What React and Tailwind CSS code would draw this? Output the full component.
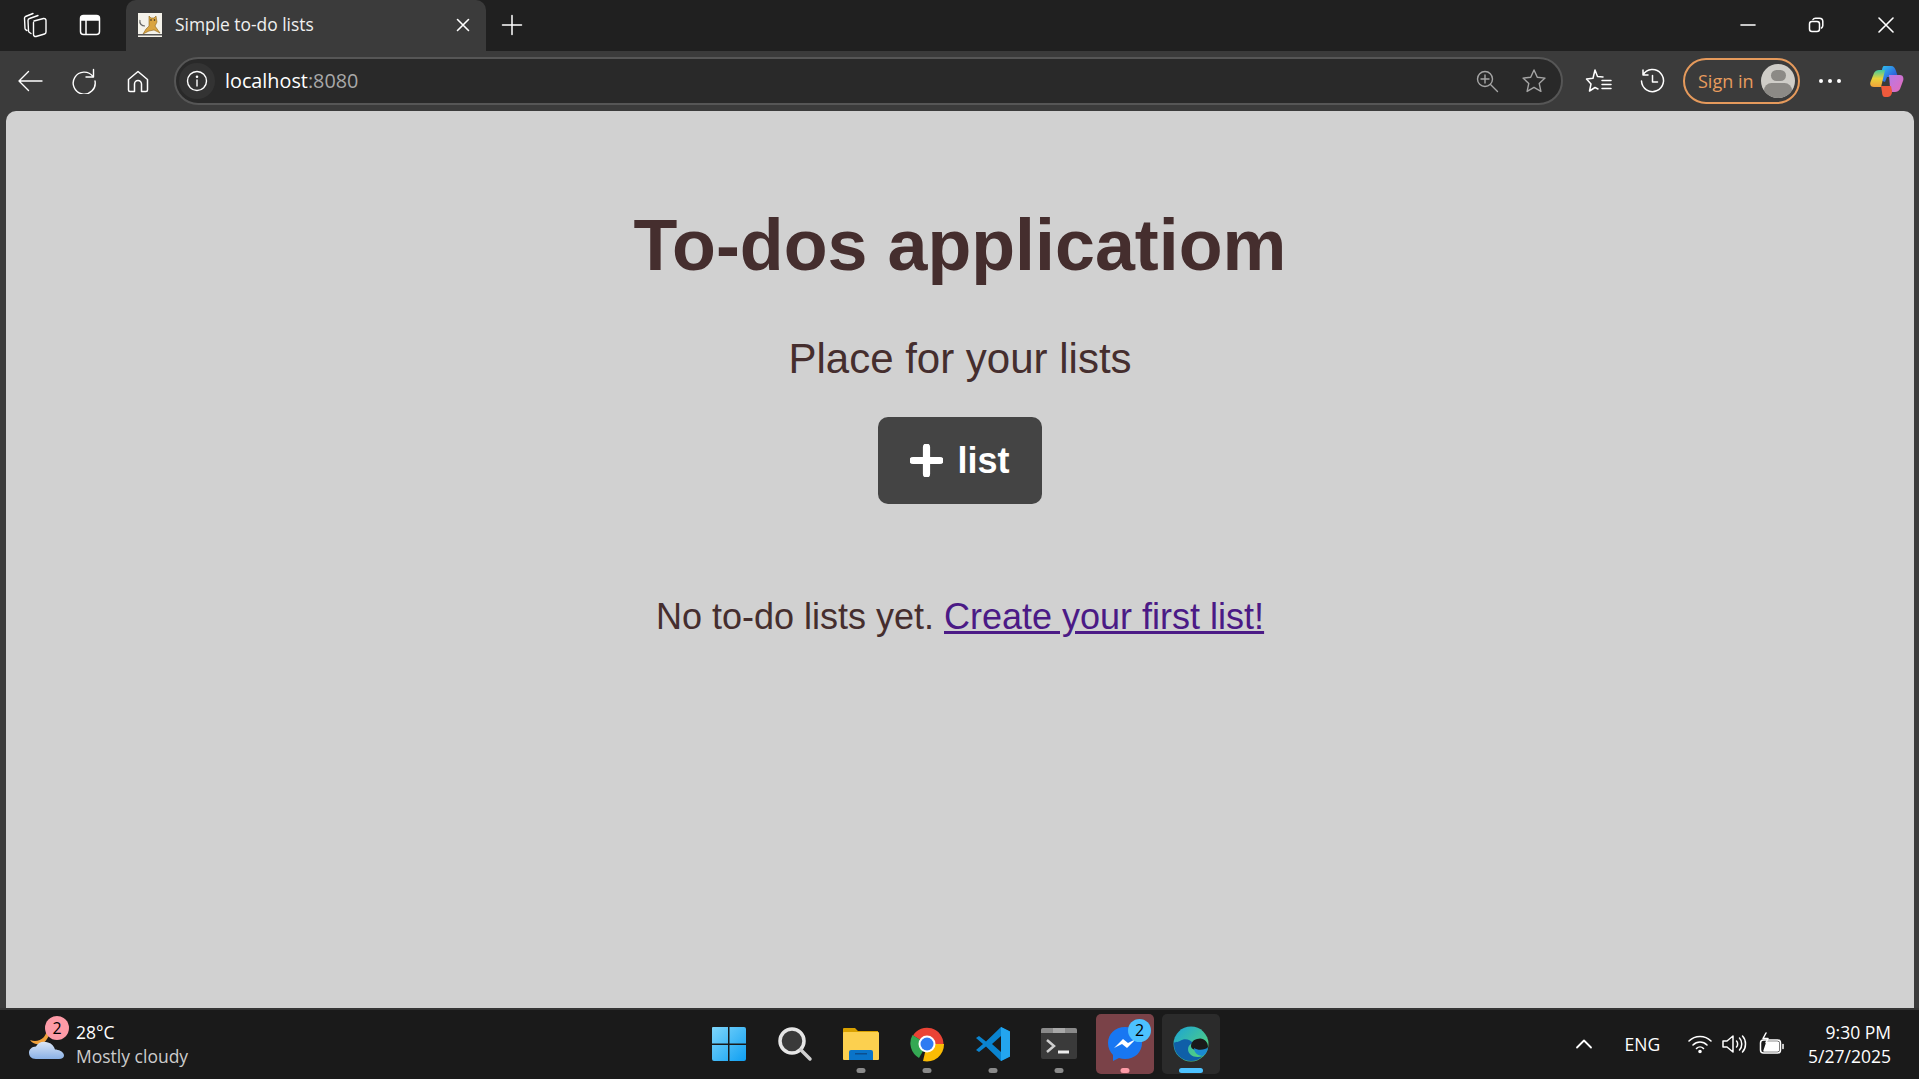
import React from "react";

const S = ({ w = 24, h = 24, vb, children, className = "", stroke = "currentColor", sw = 1.5 }) => (
  <svg width={w} height={h} viewBox={vb || `0 0 ${w} ${h}`} fill="none" stroke={stroke} strokeWidth={sw} strokeLinecap="round" strokeLinejoin="round" className={`shrink-0 ${className}`}>
    {children}
  </svg>
);

const Tomcat = () => (
  <svg width="24" height="24" viewBox="0 0 24 24" className="shrink-0">
    <rect width="24" height="24" fill="#f4f2ea" />
    <path d="M11 3l2 2h3l2-2 1 6-2 4 5 7-6-3-5 1-6 3 3-5 3-3z" fill="#d9a441" stroke="#8a6420" strokeWidth=".6" />
    <path d="M2 7c-1 4 2 6 5 6" fill="none" stroke="#666" strokeWidth="1.2" />
    <rect y="21" width="24" height="1.5" fill="#555" />
    <circle cx="13" cy="7" r=".8" fill="#222" /><circle cx="16.5" cy="7" r=".8" fill="#222" />
  </svg>
);

const Copilot = () => (
  <svg width="34" height="31" viewBox="0 0 34 31" className="shrink-0">
    <defs>
      <linearGradient id="cpa" x1="0" y1="0" x2="1" y2="1"><stop offset="0" stopColor="#2fc8f0" /><stop offset=".6" stopColor="#2f6fe0" /><stop offset="1" stopColor="#1c49b8" /></linearGradient>
      <linearGradient id="cpb" x1="0" y1="0" x2="0" y2="1"><stop offset="0" stopColor="#3ec9a0" /><stop offset=".5" stopColor="#e8d33a" /><stop offset="1" stopColor="#f2a23a" /></linearGradient>
      <linearGradient id="cpc" x1="0" y1="0" x2="1" y2="1"><stop offset="0" stopColor="#b47ae8" /><stop offset="1" stopColor="#e86ab8" /></linearGradient>
    </defs>
    <path d="M14 0h7c3 0 4 2 5 5l2 6H17l-2 5-5-2 2-10c.3-2 1-4 2-4z" fill="url(#cpa)" />
    <path d="M9 4h6l-3 13-1 4H4c-3 0-4.500-2-3.500-5L4 7c1-2 3-3 5-3z" fill="url(#cpb)" />
    <path d="M19 9h11c3 0 4 3 3 6l-3 8c-1 2-3 3-5 3h-3l-2-5z" fill="url(#cpc)" />
    <path d="M11 20h10l1 5c.5 3-2 6-4 6h-3c-2 0-3-2-3-5z" fill="#ef5a3c" />
  </svg>
);

const Tab = () => (
  <div className="flex items-center h-[51px] bg-[#202020] text-white">
    <div className="ml-[23px] mb-[2px]">
      <S w={26} h={26} sw={1.4}>
        <path d="M11 9l9.500-2.500a2 2 0 0 1 2.500 2V20a2 2 0 0 1-1.500 2L13 24.500a2 2 0 0 1-2.500-2V10.500" />
        <path d="M8 21.500L6.500 20.500a2 2 0 0 1-1-1.500L5 8.500a2 2 0 0 1 1.500-2L15 3.500" />
        <path d="M4 18.500L3 18a2 2 0 0 1-1-1.500L1.500 6a2 2 0 0 1 1-1.500L10 1.500" />
      </S>
    </div>
    <div className="ml-[29px] mb-[2px]">
      <S w={24} h={24}>
        <rect x="2.500" y="2.500" width="19" height="19" rx="3" />
        <path d="M3 7h18v-2.500l-2-1.500H5L3 4.500z" fill="currentColor" />
        <path d="M8 7v14" />
      </S>
    </div>
    <div className="ml-[24px] w-[360px] h-full bg-[#3b3b3b] rounded-t-[10px] flex items-center pl-[12px] pr-[15px] pb-[2px]">
      <Tomcat />
      <span className="ml-[13px] flex-1 text-[17.400px] [font-family:'Open_Sans',sans-serif] text-[#f0f0f0]">Simple to-do lists</span>
      <S w={16} h={16} sw={1.6}><path d="M2.500 2.500l11 11M13.500 2.500l-11 11" /></S>
    </div>
    <div className="ml-[15px] mb-[2px]">
      <S w={22} h={22} sw={1.5}><path d="M11 1.500v19M1.500 11h19" /></S>
    </div>
    <div className="flex-1" />
    <div className="flex items-center pr-[25px] mb-[2px]">
      <S w={16} h={16} sw={1.6}><path d="M1 8h14" /></S>
      <div className="ml-[52px]">
        <S w={16} h={16} sw={1.5}><rect x="1.500" y="4.500" width="10" height="10" rx="2.500" /><path d="M5 2.500c.5-1 1-1.300 2.500-1.300h4c2 0 3.300 1.300 3.300 3.300v4c0 1.500-.5 2-1.300 2.500" /></S>
      </div>
      <div className="ml-[54px]">
        <S w={16} h={16} sw={1.6}><path d="M1 1l14 14M15 1L1 15" /></S>
      </div>
    </div>
  </div>
);

const Toolbar = () => (
  <div className="flex items-center h-[60px] bg-[#3b3b3b] text-white">
    <div className="ml-[17px] w-[26px]">
      <S w={26} h={26} sw={1.4}><path d="M2 13h23M11.500 3.500L2 13l9.500 9.500" /></S>
    </div>
    <div className="ml-[28px]">
      <S w={26} h={26} sw={1.4}><path d="M22 8.500A11 11 0 1 0 24 13" /><path d="M22.500 1.500v7.500h-7.500" /></S>
    </div>
    <div className="ml-[29px]">
      <S w={24} h={24} sw={1.5}><path d="M2.500 10.500L12 2.500l9.500 8V21a1.500 1.500 0 0 1-1.500 1.500h-4.500V15a3.500 3.500 0 0 0-7 0v7.500H4A1.500 1.500 0 0 1 2.500 21z" /></S>
    </div>
    <div className="ml-[24px] w-[1389px] h-[48px] rounded-full bg-[#292929] border-2 border-[#565656] flex items-center pl-[3px] pr-[14px]">
      <div className="w-[36px] h-[36px] rounded-full bg-[#333333] flex items-center justify-center">
        <S w={22} h={22} sw={1.4}><circle cx="11" cy="11" r="9.500" /><path d="M11 10v6" /><circle cx="11" cy="6.800" r=".6" fill="currentColor" /></S>
      </div>
      <span className="ml-[10px] flex-1 text-[19.800px] [font-family:'Open_Sans',sans-serif] text-white">localhost<span className="text-[#a8a8a8]">:8080</span></span>
      <S w={24} h={24} sw={1.4} stroke="#a5a5a5"><circle cx="10" cy="10" r="7.500" /><path d="M15.500 15.500l7 7M10 6v8M6 10h8" /></S>
      <div className="ml-[22px]">
        <S w={26} h={26} sw={1.4} stroke="#a5a5a5"><path d="M13 2l3.300 7.300 7.700.8-5.800 5.300 1.700 8-6.900-4.100-6.900 4.100 1.700-8L2 10.100l7.700-.8z" /></S>
      </div>
    </div>
    <div className="ml-[22px]">
      <S w={28} h={26} sw={1.5}><path d="M10 2l2.500 6.500 5.500.5M13 21L10 19.500 4.500 23l1.500-7L1.500 11l6.500-.8L10 2" /><path d="M17 12.500h9M17 16.500h9M17 20.500h9" /></S>
    </div>
    <div className="ml-[27px]">
      <S w={26} h={26} sw={1.5}><path d="M3 7a11 11 0 1 1-1.500 6M3 2v5h5" /><path d="M12.500 7.500v6.500h5" /></S>
    </div>
    <div className="ml-[17px] w-[117px] h-[46px] rounded-full border-2 border-[#e59a5c] flex items-center pl-[13px] pr-[3px]">
      <span className="flex-1 text-[18px] [font-family:'Open_Sans',sans-serif] text-[#e89c5e] whitespace-nowrap">Sign in</span>
      <div className="w-[34px] h-[34px] rounded-full bg-[#cfcdc8] overflow-hidden flex flex-col items-center">
        <div className="mt-[6px] w-[15px] h-[15px] rounded-full bg-[#8c8a86]" />
        <div className="mt-[2px] w-[28px] h-[20px] rounded-full bg-[#8c8a86]" />
      </div>
    </div>
    <div className="ml-[19px] flex gap-[5px]">
      <div className="w-[4px] h-[4px] rounded-full bg-white" />
      <div className="w-[4px] h-[4px] rounded-full bg-white" />
      <div className="w-[4px] h-[4px] rounded-full bg-white" />
    </div>
    <div className="ml-[29px]"><Copilot /></div>
  </div>
);

const Main = () => (
  <div className="flex-1 bg-[#3b3b3b] pl-[6px] pr-[5px] min-h-0">
    <div className="h-full bg-[#d1d1d1] rounded-t-[10px] flex flex-col items-center [font-family:'Liberation_Sans',Arial,sans-serif] text-[#452e2e]">
      <h1 className="mt-[93px] text-[71.800px] leading-[83px] font-bold">To-dos applicatiom</h1>
      <p className="mt-[48px] text-[42px] leading-[48px]">Place for your lists</p>
      <button className="mt-[34px] w-[164px] h-[87px] bg-[#444444] rounded-[10px] text-white text-[36px] font-bold flex items-center justify-center gap-[14px]">
        <svg width="33" height="33" viewBox="0 0 32 32" className="shrink-0"><path d="M16 3v26M3 16h26" stroke="white" strokeWidth="7" strokeLinecap="round" /></svg>
        <span>list</span>
      </button>
      <p className="mt-[92px] text-[36px] leading-[41px]">No to-do lists yet. <a href="#" className="text-[#4b1a86] underline">Create your first list!</a></p>
    </div>
  </div>
);

const Win = () => (
  <svg width="36" height="36" viewBox="0 0 36 36">
    <defs><linearGradient id="wn" x1="0" y1="0" x2="1" y2="1"><stop offset="0" stopColor="#7ed6fb" /><stop offset="1" stopColor="#0f9ff2" /></linearGradient></defs>
    <path fill="url(#wn)" d="M1 2a1 1 0 0 1 1-1h15v16.500H1zM18.500 1H33a2 2 0 0 1 2 2v14.500H18.500zM1 19h16v16H3a2 2 0 0 1-2-2zM18.500 19H35v14a2 2 0 0 1-2 2H18.500z" />
  </svg>
);
const Search = () => (
  <svg width="36" height="36" viewBox="0 0 36 36" fill="none">
    <circle cx="15" cy="15" r="12" fill="#3a3a3a" stroke="#e6e6e6" strokeWidth="3.500" />
    <path d="M24 24l9 9" stroke="#cfcfcf" strokeWidth="3.500" strokeLinecap="round" />
  </svg>
);
const Folder = () => (
  <svg width="36" height="36" viewBox="0 0 36 36">
    <path d="M0 3a1 1 0 0 1 1-1h11l3 3h20v28H0z" fill="#d9a100" />
    <rect y="6" width="36" height="28" rx="1" fill="#fcd04f" />
    <path d="M6 34v-8a2 2 0 0 1 2-2h20a2 2 0 0 1 2 2v8z" fill="#0a74c9" />
    <rect x="12" y="27" width="12" height="1.500" fill="#0b4f8f" />
  </svg>
);
const Chrome = () => (
  <svg width="36" height="36" viewBox="0 0 36 36">
    <path d="M18 18L4 9.500A16.500 16.500 0 0 1 34.500 18H18z" fill="#ea4335" />
    <path d="M18 18l-8 14A17 17 0 0 1 3.500 9z" fill="#34a853" />
    <path d="M18 18h17A17 17 0 0 1 14 35z" fill="#fbbc04" />
    <circle cx="18" cy="18" r="8.500" fill="#fff" />
    <circle cx="18" cy="18" r="6.500" fill="#2f7bf2" />
  </svg>
);
const VSCode = () => (
  <svg width="36" height="36" viewBox="0 0 36 36">
    <path d="M26 1l9 4.500v25L26 35 11 20.500 4 26l-3-2 7-6-7-6 3-2 7 5.500z" fill="#0a84d0" />
    <path d="M26 1l9 4.500v25L26 35z" fill="#23a5ee" />
    <path d="M26 10l-9 8 9 8z" fill="#1a1a1a" />
  </svg>
);
const Term = () => (
  <svg width="36" height="36" viewBox="0 0 36 36" fill="none">
    <rect y="2" width="36" height="31" rx="2" fill="#3a3a3a" />
    <path d="M0 4a2 2 0 0 1 2-2h32a2 2 0 0 1 2 2v3H0z" fill="#8a8a8a" />
    <path d="M12 2h12v5H12z" fill="#a8a8a8" />
    <path d="M6 14l7 6-7 6" stroke="#cfcfcf" strokeWidth="2.500" />
    <path d="M17 26h11" stroke="#eee" strokeWidth="3" />
  </svg>
);
const Messenger = () => (
  <svg width="36" height="36" viewBox="0 0 36 36">
    <path d="M18 1C8 1 1 8 1 17c0 5 2 9 5 12v6l6-3c2 .5 4 1 6 1 10 0 17-7 17-16S28 1 18 1z" fill="#1877f2" />
    <path d="M7 22l9-9 5 4 8-4-9 9-5-4z" fill="#fff" />
  </svg>
);
const Edge = () => (
  <svg width="36" height="36" viewBox="0 0 36 36">
    <defs>
      <linearGradient id="eg" x1="0" y1="0" x2="1" y2="1"><stop offset="0" stopColor="#1aa3d8" /><stop offset="1" stopColor="#5fdc6a" /></linearGradient>
    </defs>
    <circle cx="18" cy="18" r="17.500" fill="url(#eg)" />
    <path d="M1 18c0 10 8 17 17 17 5 0 9-2 12-5-8 3-15-1-15-7 0-3 2-5 5-6-3-4-9-5-13-2-4 2-6 0-6 3z" fill="#0f5fa8" />
    <path d="M35 21c0-6-5-10-11-8-4 1-6 4-6 7 0 2 2 4 6 4 5 0 11 1 11-3z" fill="#1a1a1a" />
    <path d="M35 21c-2 3-10 4-14 1 0 4 3 8 9 8 3-2 5-6 5-9z" fill="#1a8ad0" />
  </svg>
);

const TaskIcon = ({ children, dot, active, bg, dotColor }) => (
  <div className={`relative w-[58px] h-[60px] flex items-center justify-center rounded-[5px] ${bg || ""}`}>
    {children}
    {dot && <div className={`absolute bottom-[1px] left-1/2 -translate-x-1/2 h-[5px] rounded-full ${active ? "w-[24px]" : "w-[9px]"} ${dotColor}`} />}
  </div>
);

const Taskbar = () => (
  <div className="flex items-center h-[71px] pb-[1px] bg-[#1a1a1a] border-t-2 border-t-[#343434] text-white relative [font-family:'Open_Sans',sans-serif]">
    <div className="w-[690px] flex items-center pl-[28px]">
      <div className="relative w-[38px] h-[38px]">
        <svg width="38" height="38" viewBox="0 0 38 38">
          <path d="M20 2a11 11 0 0 1-1 12 10 10 0 0 1-17 1c5 2 10 1 14-3 2-3 3-6 4-10z" fill="#f0a03a" />
          <path d="M8 34C3 34 1 31 1 27.500c0-3 3-6 7-6 2-4 7-6 12-4 4 1 6 4 7 7 3 0 9 2 9 6 0 2-2 3.500-5 3.500z" fill="url(#cl)" />
          <defs><linearGradient id="cl" x1="0" y1="0" x2="0" y2="1"><stop offset="0" stopColor="#dbe6f6" /><stop offset="1" stopColor="#8ab1e6" /></linearGradient></defs>
        </svg>
        <div className="absolute -top-[9px] left-[17px] w-[24px] h-[24px] rounded-full bg-[#fd9ba7] text-black text-[16px] leading-[24px] text-center">2</div>
      </div>
      <div className="ml-[10px] text-[17.500px] leading-[24px]">
        <div className="text-white">28°C</div>
        <div className="text-[#cccccc]">Mostly cloudy</div>
      </div>
    </div>
    <div className="flex items-center gap-[8px] ml-[10px]">
      <TaskIcon><Win /></TaskIcon>
      <TaskIcon><Search /></TaskIcon>
      <TaskIcon dot dotColor="bg-[#8a8a8a]"><Folder /></TaskIcon>
      <TaskIcon dot dotColor="bg-[#8a8a8a]"><Chrome /></TaskIcon>
      <TaskIcon dot dotColor="bg-[#8a8a8a]"><VSCode /></TaskIcon>
      <TaskIcon dot dotColor="bg-[#8a8a8a]"><Term /></TaskIcon>
      <TaskIcon dot dotColor="bg-[#fd9ba7]" bg="bg-[#7a4248]">
        <Messenger />
        <div className="absolute top-[5px] left-[32px] w-[23px] h-[23px] rounded-full bg-[#4cc2ff] text-black text-[16px] leading-[23px] text-center">2</div>
      </TaskIcon>
      <TaskIcon dot active dotColor="bg-[#4cc2ff]" bg="bg-[#2b2b2b]"><Edge /></TaskIcon>
    </div>
    <div className="flex-1" />
    <div className="flex items-center">
      <S w={18} h={18} sw={1.8}><path d="M2 12.500L9 5.500l7 7" /></S>
      <span className="ml-[31px] text-[17.500px]">ENG</span>
      <div className="ml-[27px]">
        <S w={26} h={22} sw={1.6}><path d="M2 8c6-6 16-6 22 0M6 12c4-4 10-4 14 0M9.500 15.500c2-2 5-2 7 0" /><circle cx="13" cy="18.500" r="1" fill="currentColor" /></S>
      </div>
      <div className="ml-[8px]">
        <S w={26} h={22} sw={1.5}><path d="M2 8v6h4l6 5V3L6 8z" /><path d="M15.500 8c1.500 1.500 1.500 4.500 0 6M18.500 5c3 3 3 9 0 12M21.500 3c4 4 4 12 0 16" /></S>
      </div>
      <div className="ml-[12px]">
        <S w={26} h={24} sw={1.5}><rect x="1.500" y="8" width="20" height="13" rx="3" /><path d="M5 19l3-9h10.500a1 1 0 0 1 1 1v7a1 1 0 0 1-1 1z" fill="currentColor" /><path d="M24 12.500v4" sw="2" /><path d="M7 1l-3 5.500h5l-2 4" /></S>
      </div>
      <div className="ml-[23px] mr-[28px] text-right text-[17.500px] leading-[24px]">
        <div>9:30 PM</div>
        <div>5/27/2025</div>
      </div>
    </div>
  </div>
);

export default function App() {
  return (
    <div className="h-[1079px] w-[1919px] flex flex-col overflow-hidden bg-[#1a1a1a]">
      <Tab />
      <Toolbar />
      <Main />
      <Taskbar />
    </div>
  );
}
